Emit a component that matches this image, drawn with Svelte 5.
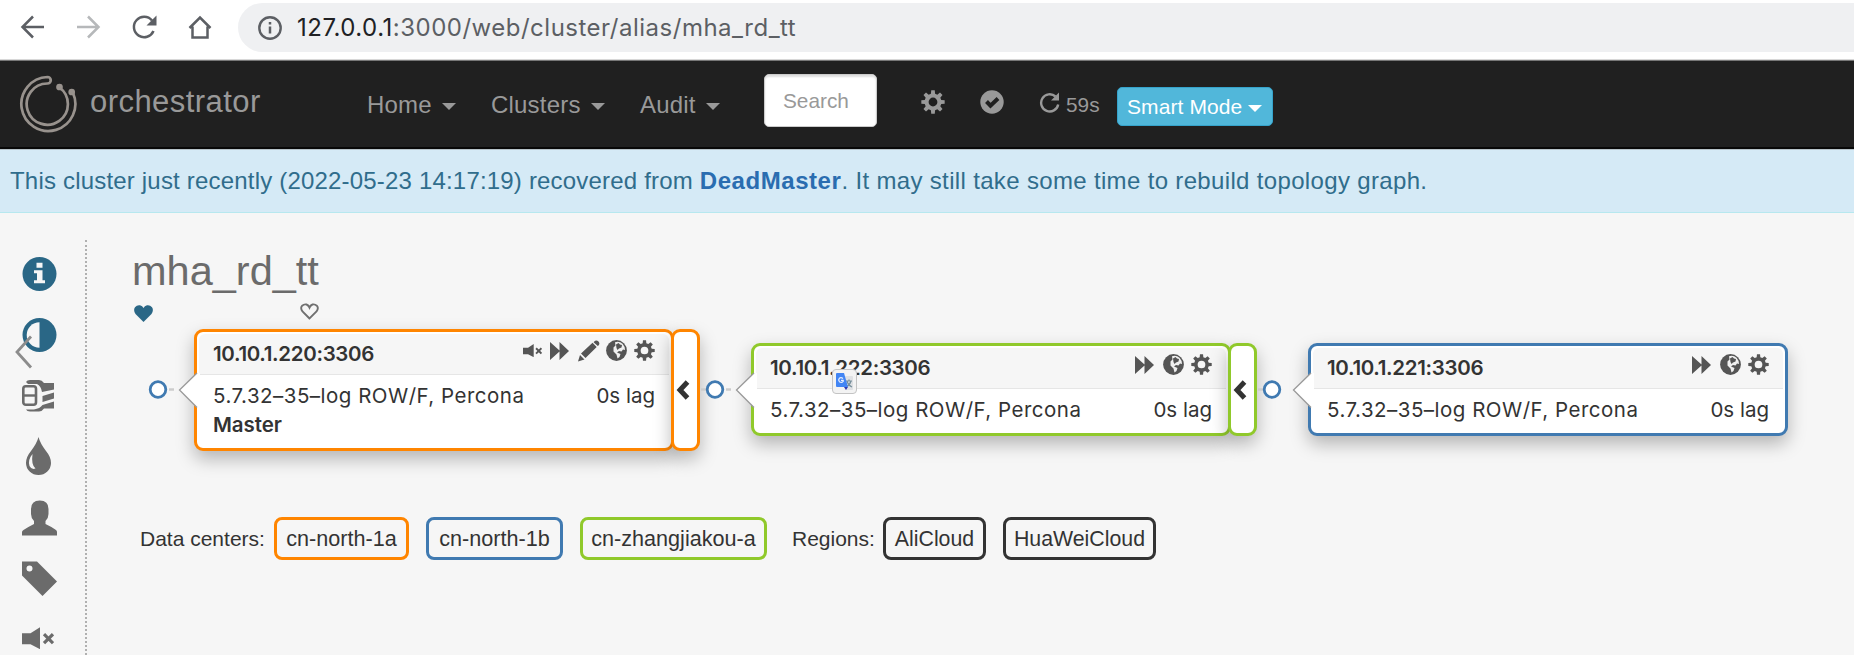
<script>
  const gear = (() => {
    const pts = [];
    for (let i = 0; i < 8; i++) {
      const a = (i * Math.PI) / 4 - Math.PI / 2;
      for (const [d, r] of [[-0.25, 8.5], [-0.15, 11.8], [0.15, 11.8], [0.25, 8.5]]) {
        pts.push(`${(12 + r * Math.cos(a + d)).toFixed(2)} ${(12 + r * Math.sin(a + d)).toFixed(2)}`);
      }
    }
    return `M${pts.join('L')}ZM12 7.6a4.4 4.4 0 1 0 0 8.8a4.4 4.4 0 1 0 0-8.8Z`;
  })();

  const menus = [
    { label: 'Home', width: 124 },
    { label: 'Clusters', width: 149 },
    { label: 'Audit', width: 124 }
  ];

  const nodes = [
    { host: '10.10.1.220:3306', x: 194, y: 329, h: 122, color: '#ff8500', master: true, fold: true, link: 0 },
    { host: '10.10.1.222:3306', x: 751, y: 343, h: 93, color: '#90c92b', fold: true, link: 1 },
    { host: '10.10.1.221:3306', x: 1308, y: 343, h: 93, color: '#407ab1', fold: false, link: 2 }
  ];

  const centers = [
    { name: 'cn-north-1a', color: '#ff8500', width: 135, gap: 17 },
    { name: 'cn-north-1b', color: '#407ab1', width: 137, gap: 17 },
    { name: 'cn-zhangjiakou-a', color: '#90c92b', width: 187, gap: 25 }
  ];
  const regions = [
    { name: 'AliCloud', color: '#333', width: 103, gap: 17 },
    { name: 'HuaWeiCloud', color: '#333', width: 153, gap: 0 }
  ];
</script>

{#snippet tag(t)}
  <span class="tag" style="border-color:{t.color};width:{t.width}px;margin-right:{t.gap}px">{t.name}</span>
{/snippet}

{#snippet muteIcon(w)}
  <svg width={w} height={w * 0.7} viewBox="0 0 32 22"><path fill="currentColor" d="M0 6h8.500L18 0V22L8.500 17H0Z" /><path d="M22 7l9 9M31 7l-9 9" stroke="currentColor" stroke-width="3.200" /></svg>
{/snippet}

<div class="page">
  <header class="browser">
    <svg class="controls" width="230" height="59" viewBox="0 0 230 59" fill="none" stroke="#5c5f64" stroke-width="2.500">
      <path d="M44 27H23M33 16.500L22.500 27L33 37.500" />
      <path d="M77 27h21M88 16.500L98.500 27L88 37.500" stroke="#b6b8ba" />
      <path d="M153.500 31A10.200 10.200 0 1 1 152 20.500" />
      <path d="M156.500 15.500v10h-10Z" fill="#5c5f64" stroke="none" />
      <path d="M189.500 28L200 17.500L210.500 28M192.500 26.500V37.500H207.500V26.500" />
    </svg>
    <div class="address">
      <svg width="26" height="26" viewBox="0 0 26 26"><circle cx="13" cy="13" r="10.700" fill="none" stroke="#5c5f64" stroke-width="2.400" /><path d="M13 11.500v7M13 7v2.600" stroke="#5c5f64" stroke-width="2.500" /></svg>
      <span class="url"><b>127.0.0.1</b>:3000/web/cluster/alias/mha_rd_tt</span>
    </div>
  </header>

  <nav>
    <svg class="logo" width="60" height="60" viewBox="0 0 60 60" fill="none" stroke="#98928d" stroke-width="2.700">
      <path d="M28.500 2A27 27 0 1 0 54 18M28.500 2A3 3 0 0 1 28.500 8.500A20.600 20.600 0 1 0 40.500 12.500" />
      <circle cx="40.500" cy="12" r="2" fill="#98928d" /><circle cx="52.700" cy="17" r="2" fill="#98928d" />
    </svg>
    <span class="brand">orchestrator</span>
    <div class="menus">
      {#each menus as m}
        <span class="menu" style="width:{m.width}px">{m.label}<i class="caret"></i></span>
      {/each}
    </div>
    <div class="search">Search</div>
    <svg class="nav-gear" width="24" height="24" viewBox="0 0 24 24"><path d={gear} fill="#999" fill-rule="evenodd" /></svg>
    <svg class="nav-check" width="24" height="24" viewBox="0 0 24 24"><circle cx="12" cy="12" r="11.700" fill="#999" /><path d="M6.500 11.500l4 4.200L18 8.500" fill="none" stroke="#202020" stroke-width="4" /></svg>
    <svg class="nav-refresh" width="22" height="22" viewBox="0 0 22 22"><path d="M19.200 12.500A8.600 8.600 0 1 1 16.500 4.500" fill="none" stroke="#999" stroke-width="2.400" /><path d="M20 .5V8.500H12Z" fill="#999" /></svg>
    <span class="seconds">59s</span>
    <span class="mode">Smart Mode<i class="caret"></i></span>
  </nav>

  <div class="notice"><span>This cluster just recently (2022-05-23 14:17:19) recovered from <b>DeadMaster</b><span class="rest">. It may still take some time to rebuild topology graph.</span></span></div>

  <div class="content">
    <aside>
      <svg viewBox="0 0 36 36" class="blue"><circle cx="17.500" cy="18" r="17" fill="currentColor" /><path d="M14.500 6.700h6v5h-6ZM12 14.200h8.500v10h2.500v3H12v-3h3v-7h-3Z" fill="#f6f6f6" /></svg>
      <svg viewBox="0 0 36 36" class="blue"><circle cx="17.500" cy="18" r="17" fill="currentColor" /><path d="M17.500 5.200A12.800 12.800 0 0 0 17.500 30.800Z" fill="#f6f6f6" /></svg>
      <svg viewBox="0 0 36 36"><rect x="1.300" y="8.300" width="12.700" height="18.500" rx="2.500" fill="none" stroke="currentColor" stroke-width="2.600" /><path d="M2 17.500h12" stroke="currentColor" stroke-width="2.400" /><path d="M4 4q1-2 4-2h9q3 0 5 3h10v6.500L20 14q-1-6-5-8H6ZM20.500 18L32 14.500v6L20.500 24ZM20.500 27L32 23.500v7H22q-2 3-5 3H8q-3 0-4-2h8q6-1 8.500-4.500Z" fill="currentColor" /></svg>
      <svg viewBox="0 0 36 38" class="drop"><path d="M16.500 0Q18 6 24 14Q29 20 29 26A12.500 12 0 0 1 4 26Q4 20 9 14Q15 6 16.500 0Z" fill="currentColor" /><path d="M10.500 17Q5.500 23 7.500 29Q9.500 33 13.500 31.500Q9 28 10.500 17Z" fill="#f6f6f6" /></svg>
      <svg viewBox="0 0 36 36"><path d="M9 9Q9 .5 17.800 .5Q26.500 .5 26.500 9V14Q26.500 18 23.500 21V24Q30 27 34 30Q35 31 35 32V35.500H0V32Q0 31 1.500 30Q6 27 12 24V21Q9 18 9 14Z" fill="currentColor" /></svg>
      <svg viewBox="0 0 36 36"><path d="M0 .5H15L35 20.500L20.500 35L0 14.500ZM7.500 4.500a3 3 0 1 0 0 6a3 3 0 1 0 0-6Z" fill-rule="evenodd" fill="currentColor" /></svg>
      <div class="mute">{@render muteIcon(32)}</div>
      <svg class="collapse" viewBox="0 0 18 34"><path d="M16 1.500L2 17L16 32.500" fill="none" stroke="#8c8c8c" stroke-width="2.800" /></svg>
    </aside>

    <main>
      <h1>mha_rd_tt</h1>
      <div class="hearts">
        <svg width="19" height="17" viewBox="0 0 19 17"><path d="M9.500 17L1.500 9Q-1 5 1 2.200Q3-.2 6 .3Q8.500 1 9.500 3Q10.500 1 13 .3Q16-.2 18 2.200Q20 5 17.500 9Z" fill="#2a6786" /></svg>
        <svg width="19" height="17" viewBox="0 0 19 17"><path d="M9.500 15.500L2.500 8.500Q0 5 2.200 2.700Q4 1 6.500 1.500Q8.500 2.200 9.500 4.500Q10.500 2.200 12.500 1.500Q15 1 16.800 2.700Q19 5 16.500 8.500Z" fill="none" stroke="#707070" stroke-width="1.900" /></svg>
      </div>

      <div class="legend">
        <span class="label">Data centers:</span>
        {#each centers as t}{@render tag(t)}{/each}
        <span class="label regions">Regions:</span>
        {#each regions as t}{@render tag(t)}{/each}
      </div>
    </main>
  </div>

  {#each nodes as n}
    <div class="card" style="left:{n.x}px;top:{n.y}px;height:{n.h}px;border-color:{n.color}">
      <div class="head">
        <strong>{n.host}</strong>
        <div class="icons">
          {#if n.master}
            <span class="small-mute">{@render muteIcon(19)}</span>
          {/if}
          <svg width="19" height="20" viewBox="0 0 19 20"><path d="M0 1L9.500 9.500V1L19 10L9.500 19V10.500L0 19Z" fill="currentColor" /></svg>
          {#if n.master}
            <svg class="pencil" width="22" height="22" viewBox="0 0 22 22"><path d="M0 21.500L2 15L6.500 19.500ZM3 13.500L14.500 2.800L18.700 7L7.500 18ZM16 1.800Q18-.5 20 1Q22.500 3 20.500 5.500L19.800 6L15.600 2.200Z" fill="currentColor" /></svg>
          {/if}
          <svg class="globe" width="21" height="21" viewBox="0 0 21 21"><circle cx="10.500" cy="10.500" r="10.400" fill="currentColor" /><path d="M9 2.200Q13.500 1 16.500 3.800Q19 6.500 19 10L17 9.500L15.500 11.500L13 11L11 12.500L14.500 14L13.500 17L11.500 18.500L10.500 14.500L7.500 11.500L7.500 7.500L9.500 5.500Z" fill="#f0f0f0" /><path d="M10 4.500l2.500-1.500l1.500 1.500l2 .5l-.5 2.500l-2.500 1l-1.500 1.500l-1-2Z" fill="currentColor" /></svg>
          <svg class="cog" width="21" height="21" viewBox="0 0 24 24"><path d={gear} fill="currentColor" fill-rule="evenodd" /></svg>
        </div>
      </div>
      <div class="body">
        <span class="version">5.7.32–35–log ROW/F, Percona</span><span class="lag">0s lag</span>
      </div>
      {#if n.master}<strong class="role">Master</strong>{/if}
    </div>
    {#if n.fold}
      <div class="fold" style="left:{n.x + 477}px;top:{n.y}px;height:{n.h}px;border-color:{n.color}"></div>
      <svg class="fold-arrow" style="left:{n.x + 482}px" width="14" height="20" viewBox="0 0 14 20"><path d="M11.500 2L4 10L11.500 18" fill="none" stroke="#333" stroke-width="5" /></svg>
    {/if}
    <svg class="link" style="left:{n.x - 51}px" width="60" height="38" viewBox="0 0 60 38">
      {#if n.link > 0}<path d="M1 18.500h7" stroke="#ccc" stroke-width="2.500" />{/if}
      {#if n.link < 2}<path d="M26 18.500h5" stroke="#ccc" stroke-width="2.500" />{/if}
      <path d="M54 2L36.500 19L54 36.500H57V2Z" fill="#fff" />
      <path d="M54 2L36.500 19L54 36.500" fill="none" stroke="#999" stroke-width="1.300" />
      <circle cx="15" cy="18.500" r="7.800" fill="#fff" stroke="#407ab1" stroke-width="2.800" />
    </svg>
  {/each}

  <div class="translate">
    <svg width="17" height="18" viewBox="0 0 17 18"><path d="M7 3h9q1 0 1 1v12q0 1-1 1H9Z" fill="#dfe1e4" /><path d="M10 8h6M13 6.500V8M15 8q-1 4-5 6M11 8q1 4 5 6" fill="none" stroke="#78909c" stroke-width="1.200" /><path d="M1 0h7l4 14H1Q0 14 0 13V1Q0 0 1 0Z" fill="#4285f4" /><path d="M8 14h4l-2 3Z" fill="#3039b0" /><path d="M7 5.500Q5 3.800 3.400 5.200Q2 7 3.400 8.700Q5.500 10.200 7.200 8.300V7.300H5" fill="none" stroke="#e9f0ff" stroke-width="1.200" /></svg>
  </div>
</div>

<style>
  :global(body) { margin: 0; background: #f6f6f6; }
  * { box-sizing: border-box; }
  .page { position: relative; width: 1854px; height: 655px; overflow: hidden; background: #f6f6f6; color: #333; font-family: "Liberation Sans", Arial, sans-serif; white-space: nowrap; }
  svg { display: block; flex: none; }

  .browser { height: 61px; background: #fff; border-bottom: 1px solid #777; box-shadow: inset 0 -1px #d8d8d8; display: flex; }
  .address { margin: 3px 0 0 8px; flex: 1; height: 49px; background: #eff0f2; border-radius: 25px 0 0 25px; display: flex; align-items: center; padding-left: 19px; }
  .url { font: 400 24px/49px Inter, sans-serif; color: #5c5f64; margin-left: 14px; letter-spacing: 0.500px; }
  .url b { font-weight: 400; color: #202124; }

  nav { height: 88px; background: #202020; border-bottom: 2px solid #080808; display: flex; align-items: flex-start; color: #999; font-size: 24px; }
  .logo { margin: 14px 0 0 19px; }
  .brand { font-size: 31px; line-height: 40px; margin: 21px 0 0 11px; width: 277px; flex: none; letter-spacing: 0.450px; }
  .menus { display: flex; width: 397px; flex: none; margin-top: 28px; line-height: 32px; }
  .menu { display: flex; align-items: center; flex: none; letter-spacing: 0.200px; }
  .caret { border: 7px solid transparent; border-top-color: currentColor; border-bottom: 0; margin: 3px 0 0 10px; }
  .search { width: 113px; height: 53px; margin-top: 13px; flex: none; background: #fff; border: 1px solid #ccc; border-radius: 5px; box-shadow: inset 0 2px 2px #0002; padding-left: 18px; font-size: 20.800px; line-height: 51px; }
  .nav-gear { margin: 29px 0 0 44px; }
  .nav-check { margin: 29px 0 0 35px; }
  .nav-refresh { margin: 31px 0 0 35px; }
  .seconds { font-size: 20.800px; line-height: 30px; margin: 29px 0 0 5px; width: 51px; flex: none; }
  .mode { width: 156px; height: 39px; margin-top: 26px; flex: none; display: flex; align-items: center; color: #fff; background: #51b7da; border: 1px solid #35a3cb; border-radius: 5px; padding-left: 9px; font-size: 21px; letter-spacing: 0.1px; }
  .mode .caret { margin-left: 6px; }

  .notice { height: 64px; background: #d5eaf6; border-bottom: 1px solid #b7e8ef; border-top: 1px solid #b7c3c9; color: #306d8c; font-size: 24px; line-height: 62px; padding-left: 10px; letter-spacing: 0.190px; }
  .notice b { color: #2a6db0; letter-spacing: 0.550px; }
  .notice .rest { letter-spacing: 0.340px; }

  .content { display: flex; height: 442px; padding-top: 27px; }
  aside { position: relative; width: 87px; height: 415px; flex: none; border-right: 2px dotted #b0b0b0; color: #6b6b6b; padding: 16px 0 0 22px; display: flex; flex-direction: column; gap: 25px; overflow: hidden; }
  aside > svg { width: 36px; height: 36px; }
  aside .blue { color: #2a6786; }
  aside > .drop { height: 38px; margin: -2px 0 0; }
  aside > .mute { padding-top: 5px; }
  aside > .collapse { position: absolute; left: 15px; top: 95px; width: 18px; height: 34px; }
  main { padding-left: 47px; }
  h1 { margin: 4px 0 0 -2px; font-weight: 400; font-size: 41.500px; line-height: 54px; color: #6b6b6b; }
  .hearts { display: flex; justify-content: space-between; align-items: flex-start; width: 185px; margin-top: 5px; }
  .hearts svg:first-child { margin-top: 2px; }
  .legend { display: flex; align-items: center; margin-top: 195px; padding-left: 6px; font-size: 21.600px; }
  .label { width: 134px; flex: none; font-size: 21px; }
  .regions { width: 91px; }
  .tag { height: 43px; flex: none; border: 3.500px solid; border-radius: 8px; line-height: 38px; display: flex; justify-content: center; }
  .regions ~ .tag { font-size: 21.300px; }

  .card { position: absolute; width: 480px; border: 3px solid; border-radius: 9px; background: #fff; box-shadow: 0 8px 18px #0004; font: 400 20.500px/29px Inter, sans-serif; padding: 2px; }
  .head { height: 41px; background: #f6f6f6; border-bottom: 1px solid #e6e6e6; border-radius: 6px 6px 0 0; display: flex; justify-content: space-between; padding: 5px 14px 0 14px; }
  .head strong { font-weight: 600; letter-spacing: -0.320px; }
  .icons { display: flex; color: #555; gap: 8px; padding-top: 2px; }
  .small-mute { padding-top: 3px; }
  .globe { margin-left: 1.500px; margin-top: -1px; }
  .pencil { margin: -1px -3px 0 1px; }
  .cog { margin-left: -1px; margin-top: -1px; }
  .body { display: flex; justify-content: space-between; padding: 6px 14px 0 14px; }
  .version { letter-spacing: 0.490px; }
  .role { display: block; padding-left: 14px; font-weight: 600; letter-spacing: -0.050px; }
  .fold { position: absolute; width: 29px; border: 3px solid; border-radius: 9px; background: #fff; box-shadow: 0 8px 18px #0004; }
  .fold-arrow { position: absolute; top: 380px; }
  .link { position: absolute; top: 371px; }
  .translate { position: absolute; left: 832px; top: 369px; width: 25px; height: 25px; background: #f3f3f3; border: 1px solid #c4c4c4; border-radius: 4px; padding: 3px; }
</style>
